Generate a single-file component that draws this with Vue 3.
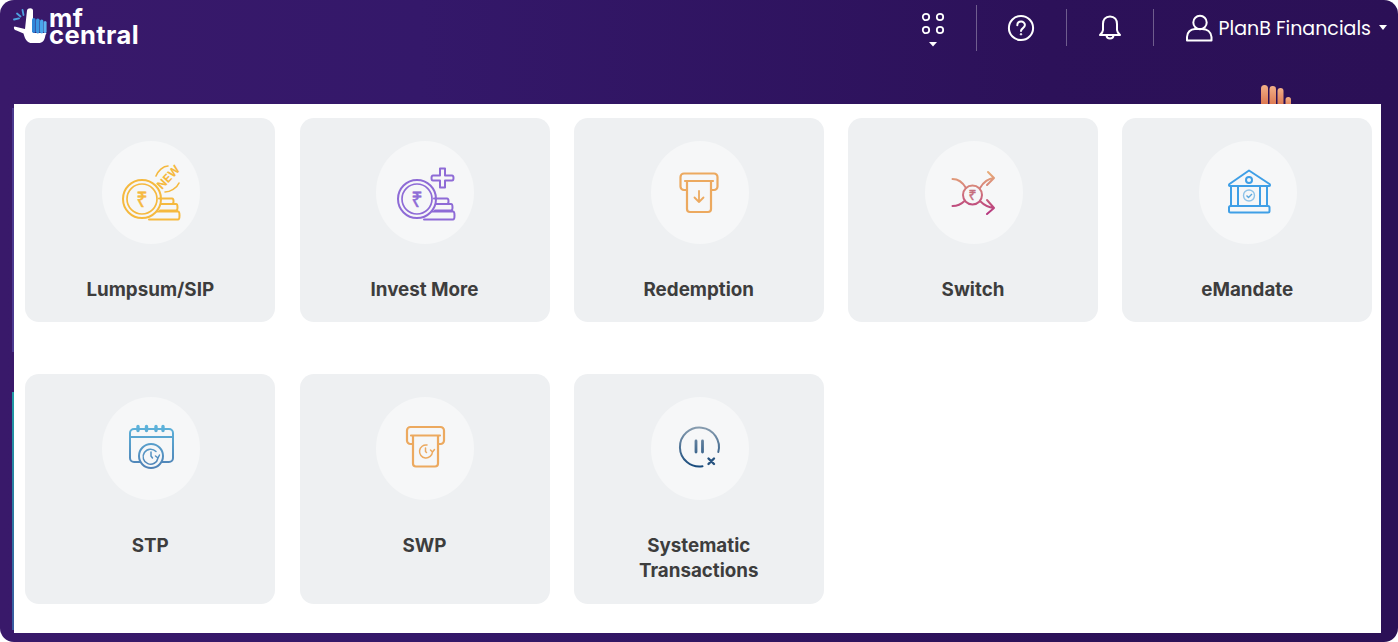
<script setup>
const rowOne = [
  { name: 'Lumpsum/SIP', icon: 'lumpsum' },
  { name: 'Invest More', icon: 'invest' },
  { name: 'Redemption', icon: 'redemption' },
  { name: 'Switch', icon: 'switch' },
  { name: 'eMandate', icon: 'emandate' }
]
const rowTwo = [
  { name: 'STP', icon: 'stp' },
  { name: 'SWP', icon: 'swp' },
  { name: 'Systematic Transactions', icon: 'systematic' }
]
const tiles = [...rowOne, ...rowTwo]
</script>

<template>
  <div class="page">
    <div class="frame">
      <header class="topbar">
        <div class="brand">
          <svg class="brand-hand" width="34" height="40" viewBox="0 0 34 40">
            <path d="M1.500 19.500c-1.500 1.500 0 3.500 2 4l7 3c1 4 3 9 7 9.500h8c4 0 6-2 7-8l1-2H20V3.500c0-3-5.500-3-6 0L12 22z" fill="#fff" />
            <rect x="19" y="11" width="3.600" height="15" rx="1.700" fill="#2f86d8" />
            <rect x="23" y="11.500" width="3.600" height="15" rx="1.700" fill="#3b97e2" />
            <rect x="27" y="12.500" width="3.400" height="14" rx="1.700" fill="#49a5ea" />
            <rect x="30.600" y="14" width="3" height="12" rx="1.500" fill="#5cb3ef" />
            <path d="M1 12.500l5-1.200M4 6.500l3.500 3M9.500 3l1 5" stroke="#4ea3e0" stroke-width="1.800" fill="none" stroke-linecap="round" />
          </svg>
          <div class="brand-name">mf<br />central</div>
        </div>

        <nav class="actions">
          <button class="action apps" aria-label="Apps">
            <svg width="24" height="38" viewBox="0 0 24 38" fill="none" stroke="#fff" stroke-width="1.800">
              <circle cx="5" cy="5" r="3.200" />
              <circle cx="19" cy="5" r="3.200" />
              <circle cx="5" cy="18" r="3.200" />
              <circle cx="19" cy="18" r="3.200" />
              <path d="M8 30h8l-4 4.500z" fill="#fff" stroke="none" />
            </svg>
          </button>
          <span class="divider tall"></span>
          <button class="action help" aria-label="Help">
            <svg width="28" height="28" viewBox="0 0 28 28" fill="none" stroke="#fff" stroke-width="2">
              <circle cx="14" cy="14" r="12.100" />
              <path d="M10.300 11.300c0-5 7.600-5 7.600-.2 0 3-3.900 3-3.900 6" stroke-linecap="round" />
              <circle cx="14" cy="20.300" r=".8" fill="#fff" stroke-width=".8" />
            </svg>
          </button>
          <span class="divider"></span>
          <button class="action bell" aria-label="Notifications">
            <svg width="28" height="28" viewBox="0 0 28 28" fill="none" stroke="#fff" stroke-width="2" stroke-linejoin="round">
              <path d="M14 2.500c-4.800 0-7 3.500-7 7.500v6c0 2-1.500 3.500-3 5h20c-1.500-1.500-3-3-3-5v-6c0-4-2.200-7.500-7-7.500z" />
              <path d="M10.500 21.500c.3 4 6.700 4 7 0" />
            </svg>
          </button>
          <span class="divider"></span>
          <button class="action user">
            <svg width="28" height="28" viewBox="0 0 28 28" fill="none" stroke="#fff" stroke-width="2" stroke-linejoin="round">
              <circle cx="15" cy="8.500" r="6.700" />
              <path d="M2 26.500v-3.500c0-4.500 3.500-8 8-8h7c5 0 9 3 9.500 8v3.500z" />
            </svg>
            <span class="user-name">PlanB Financials</span>
            <span class="caret"></span>
          </button>
        </nav>
      </header>

      <main class="sheet">
        <svg class="peek-hand" width="30" height="20" viewBox="0 0 30 20">
          <defs>
            <linearGradient id="skin" x1="0" y1="0" x2="0" y2="1">
              <stop offset="0" stop-color="#f2b088" />
              <stop offset="1" stop-color="#d96f48" />
            </linearGradient>
          </defs>
          <rect x="0" y="1" width="7" height="22" rx="3.500" fill="url(#skin)" />
          <rect x="8.500" y="2" width="6.500" height="22" rx="3.200" fill="url(#skin)" />
          <rect x="16.500" y="4" width="6" height="20" rx="3" fill="url(#skin)" />
          <rect x="24.500" y="13" width="5.500" height="12" rx="2.700" fill="url(#skin)" />
        </svg>
        <span class="peek-edge violet"></span>
        <span class="peek-edge teal"></span>

        <div class="grid">
          <a v-for="tile in tiles" :key="tile.name" class="tile">
            <span class="disc">
              <svg v-if="tile.icon === 'lumpsum'" viewBox="12 10 98 103" fill="none" stroke="#f5b93f" stroke-width="2" stroke-linecap="round" stroke-linejoin="round">
                <circle cx="52" cy="68" r="19" />
                <circle cx="52" cy="68" r="15" stroke-width="1.700" />
                <text x="52" y="75.500" class="rupee" fill="#f5b93f" stroke="#f5b93f" stroke-width=".5">₹</text>
                <path d="M69 67.500h13c2 0 2 5.500 0 5.500H71M71 73h15c2 0 2 6.500 0 6.500H70M67 80.500h21c2 0 2 8 0 8H59" />
                <text x="0" y="0" class="new" fill="#f5b93f" stroke="none" transform="translate(72 59) rotate(-47)">NEW</text>
                <path d="M66 45c2-5 7-10 12-10M75 61c5 0 12-4 14-9" stroke-width="1.600" />
              </svg>

              <svg v-else-if="tile.icon === 'invest'" viewBox="11 10 98 103" fill="none" stroke="#8e6bd6" stroke-width="2" stroke-linecap="round" stroke-linejoin="round">
                <circle cx="52" cy="68" r="19" />
                <circle cx="52" cy="68" r="15" stroke-width="1.700" />
                <text x="52" y="75.500" class="rupee" fill="#8e6bd6" stroke="#8e6bd6" stroke-width=".5">₹</text>
                <path d="M69 67.500h13c2 0 2 5.500 0 5.500H71M71 73h15c2 0 2 6.500 0 6.500H70M67 80.500h21c2 0 2 8 0 8H59" />
                <path d="M75 37.500h5v7h7c2 0 2 5 0 5h-7v7h-5v-7h-7c-2 0-2-5 0-5h7z" />
              </svg>

              <svg v-else-if="tile.icon === 'redemption'" viewBox="11 10 98 103" fill="none" stroke="#eca95f" stroke-width="2.200" stroke-linecap="round" stroke-linejoin="round">
                <path d="M47 59h-3a3.500 3.500 0 0 1-3.500-3.500v-9.500a3.500 3.500 0 0 1 3.500-3.500h30a3.500 3.500 0 0 1 3.500 3.500v9.500a3.500 3.500 0 0 1-3.500 3.500h-3" />
                <path d="M45 50h28M47 50v28a3 3 0 0 0 3 3h18a3 3 0 0 0 3-3V50" />
                <path d="M59 60v11M54.500 66.500l4.500 4.500 4.500-4.500" stroke-width="1.800" />
              </svg>

              <svg v-else-if="tile.icon === 'switch'" viewBox="12 10 98 103" fill="none" stroke="url(#switchInk)" stroke-width="2" stroke-linecap="round" stroke-linejoin="round">
                <defs>
                  <linearGradient id="switchInk" gradientUnits="userSpaceOnUse" x1="0" y1="41" x2="0" y2="83">
                    <stop offset="0" stop-color="#e8ac78" />
                    <stop offset="1" stop-color="#b5357f" />
                  </linearGradient>
                </defs>
                <circle cx="59.500" cy="64" r="9.500" />
                <text x="59.500" y="69" class="rupee small" fill="#c56d7c" stroke="#c56d7c" stroke-width=".4">₹</text>
                <path d="M39.500 48c6 0 10 3 13.500 9M39.500 75c5 0 8.500-1.500 12-5M67 57c3-5 7-9.500 14-10M75 41l6 6-7 7M67 70c4 4 8 6.500 14 7M74 69l7 8-7 6" />
              </svg>

              <svg v-else-if="tile.icon === 'emandate'" viewBox="12 10 98 103" fill="none" stroke="#3f9fe6" stroke-width="2" stroke-linejoin="round">
                <path d="M62 39.500L42.500 53c-1 1-.5 2 .5 2h39c1 0 1.500-1 .5-2z" />
                <circle cx="62" cy="49" r="3" />
                <path d="M44 55v20M51 55v20M73 55v20M80 55v20" />
                <rect x="42" y="75" width="40.500" height="6.500" rx="1.500" />
                <circle cx="62" cy="64.500" r="5.500" stroke="#8fc3e8" stroke-width="1.400" />
                <path d="M59.500 64.500l2 2 3.500-3.500" stroke="#5aa7dd" stroke-width="1.400" />
              </svg>

              <svg v-else-if="tile.icon === 'stp'" viewBox="12 8 98 103" fill="none" stroke="url(#stpInk)" stroke-width="2" stroke-linecap="round" stroke-linejoin="round">
                <defs>
                  <linearGradient id="stpInk" gradientUnits="userSpaceOnUse" x1="0" y1="36" x2="0" y2="80">
                    <stop offset="0" stop-color="#5db4dc" />
                    <stop offset="1" stop-color="#4f80b4" />
                  </linearGradient>
                </defs>
                <path d="M50 73h-6a4 4 0 0 1-4-4V44a4 4 0 0 1 4-4h35a4 4 0 0 1 4 4v25a4 4 0 0 1-4 4h-7M40 48h43" />
                <path d="M48 37.500v4M56.500 37.500v4M66 37.500v4M73 37.500v4" stroke-width="3.400" />
                <circle cx="61" cy="67" r="12" fill="#f6f7f8" />
                <path d="M66 62.500a7.500 7.500 0 1 0 2 6.500M69.500 66l-1.500 3-2.500-2M61 63v4l1.500 2" stroke-width="1.500" />
              </svg>

              <svg v-else-if="tile.icon === 'swp'" viewBox="11 8 98 103" fill="none" stroke="#eca95f" stroke-width="2.200" stroke-linecap="round" stroke-linejoin="round">
                <path d="M48 55h-2.500a3.500 3.500 0 0 1-3.500-3.500v-10a3.500 3.500 0 0 1 3.500-3.500h30a3.500 3.500 0 0 1 3.500 3.500v10a3.500 3.500 0 0 1-3.500 3.500h-2.500" />
                <path d="M46 46.500h29M48 46.500v28a3 3 0 0 0 3 3h19a3 3 0 0 0 3-3v-28" />
                <path d="M62 56a6.500 6.500 0 1 0 5.500 7M69.500 60.500l-2 2.500-2-2M60.500 59v3.500l1 1" stroke-width="1.500" />
              </svg>

              <svg v-else viewBox="11 8 98 103" fill="none" stroke="url(#pauseInk)" stroke-width="2" stroke-linecap="round">
                <defs>
                  <linearGradient id="pauseInk" gradientUnits="userSpaceOnUse" x1="0" y1="37" x2="0" y2="78">
                    <stop offset="0" stop-color="#8a9eb0" />
                    <stop offset="1" stop-color="#174a7c" />
                  </linearGradient>
                </defs>
                <path d="M62.500 77.300A19.500 19.500 0 1 1 78.300 63" />
                <path d="M56 52v11M62.500 52v11" stroke-width="2.800" />
                <path d="M68.500 69.500l5.500 5.500M74 69.500l-5.500 5.500" stroke="#26527f" stroke-width="2.400" />
              </svg>
            </span>
            <span class="tile-name">{{ tile.name }}</span>
          </a>
        </div>
      </main>
    </div>
  </div>
</template>

<style scoped>
.page {
  width: 1398px;
  height: 642px;
  background: #fff;
  overflow: hidden;
}

.frame {
  height: 642px;
  box-sizing: border-box;
  padding-bottom: 9px;
  display: flex;
  flex-direction: column;
  border-radius: 14px;
  background: linear-gradient(90deg, #39196a 0%, #34186a 30%, #2c1159 75%, #2b1056 100%);
}

.topbar {
  height: 104px;
  flex: none;
  box-sizing: border-box;
  padding: 4px 11px 0 13px;
  display: flex;
  align-items: flex-start;
  justify-content: space-between;
}

.brand {
  display: flex;
  align-items: flex-start;
  gap: 2px;
  padding-top: 3px;
}

.brand-name {
  color: #fff;
  font-family: Inter, "Liberation Sans", sans-serif;
  font-size: 25.500px;
  font-weight: 700;
  letter-spacing: 0.4px;
  line-height: 17px;
  padding-top: 2px;
}

.actions {
  display: flex;
  align-items: center;
  height: 47px;
}

.action {
  display: flex;
  align-items: center;
  padding: 0;
  border: 0;
  background: none;
  color: #fff;
}

.apps {
  margin: 3px 31px 0 0;
  padding-top: 3px;
}

.help {
  margin: 0 31px 0 30px;
}

.bell {
  margin: 0 29px;
}

.user {
  margin-left: 31px;
}

.divider {
  width: 1px;
  height: 37px;
  background: rgba(255, 255, 255, 0.32);
}

.divider.tall {
  height: 46px;
}

.user-name {
  margin-left: 6px;
  padding-top: 1px;
  font-family: Poppins, Lato, "Noto Sans", sans-serif;
  font-size: 19px;
  white-space: nowrap;
}

.caret {
  margin-left: 8px;
  border-style: solid;
  border-width: 5px 4.500px 0;
  border-color: #fff transparent transparent;
}

.sheet {
  position: relative;
  flex: 1;
  margin: 0 17px 0 14px;
  padding: 14px 9px 29px 11.250px;
  background: #fff;
}

.peek-hand {
  position: absolute;
  left: 1247px;
  bottom: 100%;
}

.peek-edge {
  position: absolute;
  right: 100%;
  width: 2px;
}

.peek-edge.violet {
  top: 4px;
  height: 244px;
  background: #4b3a8f;
}

.peek-edge.teal {
  top: 288px;
  height: 238px;
  background: linear-gradient(180deg, #1f9aa5, #3a5aa0);
}

.grid {
  display: grid;
  grid-template-columns: repeat(5, 250px);
  grid-template-rows: 204px 230px;
  column-gap: 24.250px;
  row-gap: 52px;
}

.tile {
  display: flex;
  flex-direction: column;
  align-items: center;
  padding-top: 23px;
  border-radius: 14px;
  background: #eef0f2;
  color: #3d3d3d;
  text-align: center;
}

.disc {
  width: 98px;
  height: 103px;
  flex: none;
  margin-left: 1.500px;
  border-radius: 50%;
  background: #f6f7f8;
}

.disc svg {
  display: block;
  width: 98px;
  height: 103px;
}

.tile-name {
  margin-top: 33px;
  width: 150px;
  font-family: Inter, "Liberation Sans", sans-serif;
  font-size: 18.800px;
  font-weight: 700;
  line-height: 25px;
}

.rupee {
  font-family: "Noto Sans", "DejaVu Sans", sans-serif;
  font-size: 20px;
  text-anchor: middle;
}

.rupee.small {
  font-size: 14px;
}

.new {
  font-family: Inter, sans-serif;
  font-size: 11.500px;
  font-weight: 700;
}
</style>

<style>
html,
body {
  margin: 0;
  background: #fff;
}
</style>
